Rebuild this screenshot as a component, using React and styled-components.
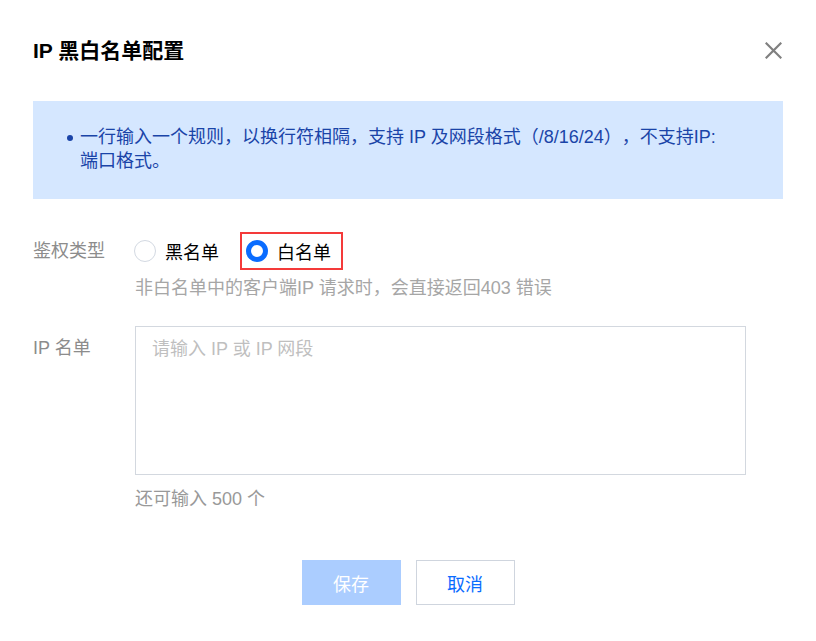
import React from "react";
import styled, { createGlobalStyle } from "styled-components";

const GlobalStyle = createGlobalStyle`
  html, body {
    margin: 0;
    padding: 0;
    background: #fff;
  }
  body {
    font-family: "Liberation Sans", "Noto Sans CJK SC", sans-serif;
    font-size: 18px;
    color: #000;
    text-spacing-trim: space-all;
  }
  * {
    box-sizing: border-box;
  }
`;

const Dialog = styled.div`
  width: 816px;
  height: 641px;
  padding: 0 33px;
  background: #fff;
`;

const Header = styled.div`
  height: 101px;
  display: flex;
  align-items: center;
  justify-content: space-between;
`;

const Title = styled.h2`
  margin: 0;
  font-size: 21px;
  font-weight: 700;
  line-height: 28px;
  color: #000;
`;

const CloseBtn = styled.button`
  width: 22px;
  height: 22px;
  margin-right: -1px;
  padding: 0;
  border: 0;
  background: none;
  display: flex;
  align-items: center;
  justify-content: center;
  cursor: pointer;
`;

const InfoBox = styled.div`
  background: #d5e7ff;
  padding: 24px 62px 26px 34px;
`;

const InfoItem = styled.div`
  display: flex;
  align-items: flex-start;
  color: #1a44a8;
  font-size: 18px;
  line-height: 24px;
`;

const Dot = styled.span`
  flex: none;
  width: 6px;
  height: 6px;
  margin: 10px 7px 0 0;
  border-radius: 50%;
  background: #1a44a8;
`;

const FormRow = styled.div`
  display: flex;
  align-items: ${(p) => (p.$top ? "flex-start" : "center")};
  margin-top: ${(p) => p.$mt}px;
`;

const Label = styled.div`
  flex: none;
  width: 102px;
  color: #8c8c8c;
  font-size: 18px;
  line-height: 24px;
  padding-top: ${(p) => p.$pt || 0}px;
`;

const RadioGroup = styled.div`
  display: flex;
  align-items: center;
  gap: 21px;
`;

const RadioOption = styled.label`
  display: flex;
  align-items: center;
  gap: 9px;
  height: 38px;
  font-size: 18px;
  color: #000;
  cursor: pointer;
  margin-left: -1px;
  ${(p) =>
    p.$highlighted &&
    `
    border: 2px solid #f43a3a;
    padding: 0 10px 0 4px;
    margin-left: 0;
  `}
`;

const RadioCircle = styled.span`
  flex: none;
  width: 22px;
  height: 22px;
  border-radius: 50%;
  border: ${(p) => (p.$checked ? "5px solid #0a6cff" : "1px solid #d3d9e2")};
  background: #fff;
`;

const Hint = styled.div`
  margin: 6px 0 0 102px;
  color: #a6a6a6;
  font-size: 18px;
  line-height: 24px;
`;

const TextArea = styled.textarea`
  width: 611px;
  height: 149px;
  padding: 10px 16px;
  border: 1px solid #d3d8df;
  border-radius: 0;
  resize: none;
  outline: none;
  font-family: inherit;
  font-size: 18px;
  line-height: 24px;
  color: #000;
  &::placeholder {
    color: #bfbfbf;
  }
`;

const Counter = styled.div`
  margin: 12px 0 0 102px;
  color: #999;
  font-size: 18px;
  line-height: 24px;
`;

const Footer = styled.div`
  display: flex;
  justify-content: center;
  gap: 15px;
  margin-top: 49px;
`;

const Button = styled.button`
  width: 99px;
  height: 45px;
  font-family: inherit;
  font-size: 18px;
  border-radius: 0;
  cursor: pointer;
  border: 1px solid ${(p) => (p.$primary ? "#abcdff" : "#cfd5de")};
  background: ${(p) => (p.$primary ? "#abcdff" : "#fff")};
  color: ${(p) => (p.$primary ? "#fff" : "#0a6cff")};
`;

const CloseIcon = () => (
  <svg width="17" height="17" viewBox="0 0 17 17">
    <path
      d="M1.5 1.5 L15.5 15.5 M15.5 1.5 L1.5 15.5"
      stroke="#808080"
      strokeWidth="2.2"
      strokeLinecap="square"
    />
  </svg>
);

export default function App() {
  const [type, setType] = React.useState("white");

  return (
    <>
      <GlobalStyle />
      <Dialog>
        <Header>
          <Title>IP 黑白名单配置</Title>
          <CloseBtn aria-label="关闭">
            <CloseIcon />
          </CloseBtn>
        </Header>

        <InfoBox>
          <InfoItem>
            <Dot />
            <span>
              一行输入一个规则，以换行符相隔，支持 IP 及网段格式（/8/16/24），不支持IP:端口格式。
            </span>
          </InfoItem>
        </InfoBox>

        <FormRow $mt={33}>
          <Label>鉴权类型</Label>
          <RadioGroup>
            <RadioOption onClick={() => setType("black")}>
              <RadioCircle $checked={type === "black"} />
              黑名单
            </RadioOption>
            <RadioOption $highlighted onClick={() => setType("white")}>
              <RadioCircle $checked={type === "white"} />
              白名单
            </RadioOption>
          </RadioGroup>
        </FormRow>
        <Hint>非白名单中的客户端IP 请求时，会直接返回403 错误</Hint>

        <FormRow $mt={26} $top>
          <Label $pt={10}>IP 名单</Label>
          <TextArea placeholder="请输入 IP 或 IP 网段" />
        </FormRow>
        <Counter>还可输入 500 个</Counter>

        <Footer>
          <Button $primary>保存</Button>
          <Button>取消</Button>
        </Footer>
      </Dialog>
    </>
  );
}
